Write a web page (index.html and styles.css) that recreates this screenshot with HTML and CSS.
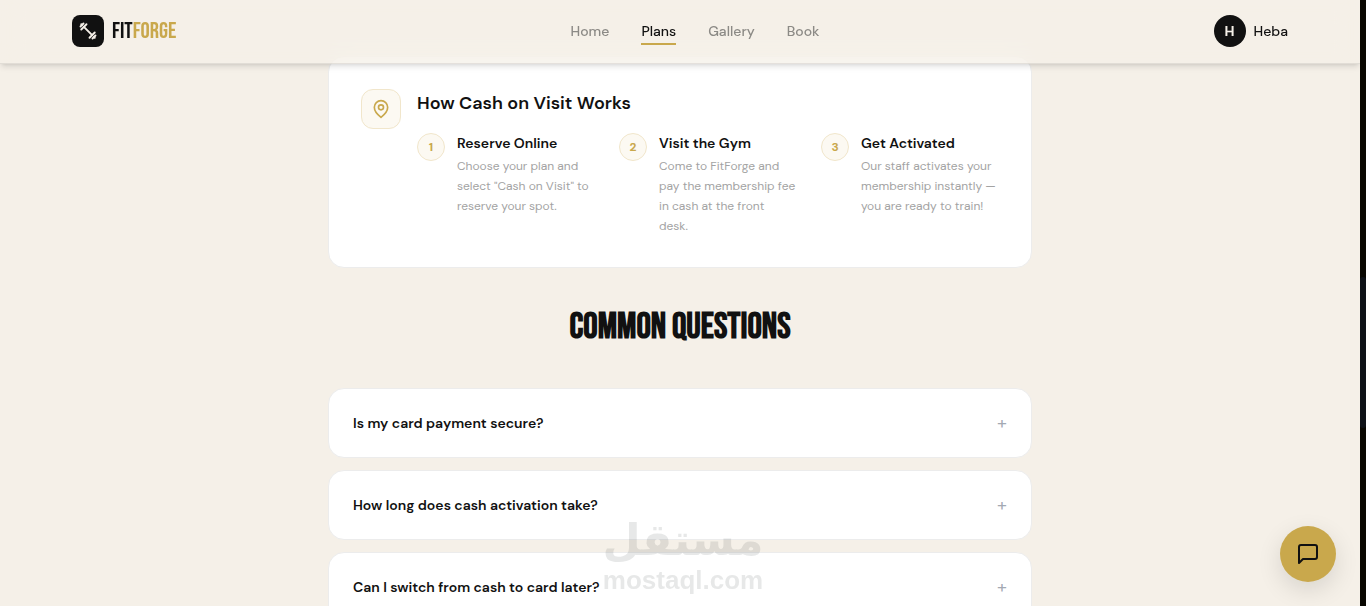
FILE: index.html
```html
<!DOCTYPE html>
<html lang="en">
<head>
    <meta charset="UTF-8">
    <meta name="viewport" content="width=device-width, initial-scale=1.0">
    <title>FitForge - Plans</title>
    <link rel="stylesheet" href="styles.css">
</head>
<body>

<header class="site-header">
    <div class="header-inner">
        <a href="#" class="logo">
            <span class="logo-icon">
                <svg width="18" height="18" viewBox="0 0 24 24" fill="none" stroke="currentColor" stroke-width="2.5" stroke-linecap="round" stroke-linejoin="round" aria-hidden="true">
                    <path d="m6.5 6.5 11 11"/>
                    <path d="m21 21-1-1"/>
                    <path d="m3 3 1 1"/>
                    <path d="m18 22 4-4"/>
                    <path d="m2 6 4-4"/>
                    <path d="m3 10 7-7"/>
                    <path d="m14 21 7-7"/>
                </svg>
            </span>
            <span class="logo-text">FIT<span class="gold">FORGE</span></span>
        </a>

        <nav class="nav">
            <a href="#">Home</a>
            <a href="#" class="active">Plans</a>
            <a href="#">Gallery</a>
            <a href="#">Book</a>
        </nav>

        <a href="#" class="user">
            <span class="avatar">H</span>
            <span>Heba</span>
        </a>
    </div>
</header>

<main class="container">
    <section class="card how">
        <span class="how-icon">
            <svg width="20" height="20" viewBox="0 0 24 24" fill="none" stroke="currentColor" stroke-width="2" stroke-linecap="round" stroke-linejoin="round" aria-hidden="true">
                <path d="M20 10c0 6-8 12-8 12s-8-6-8-12a8 8 0 0 1 16 0Z"/>
                <circle cx="12" cy="10" r="3"/>
            </svg>
        </span>
        <div class="how-body">
            <h3>How Cash on Visit Works</h3>
            <div class="steps">
                <div class="step">
                    <span class="step-number">1</span>
                    <div>
                        <h4>Reserve Online</h4>
                        <p>Choose your plan and select "Cash on Visit" to reserve your spot.</p>
                    </div>
                </div>
                <div class="step">
                    <span class="step-number">2</span>
                    <div>
                        <h4>Visit the Gym</h4>
                        <p>Come to FitForge and pay the membership fee in cash at the front desk.</p>
                    </div>
                </div>
                <div class="step">
                    <span class="step-number">3</span>
                    <div>
                        <h4>Get Activated</h4>
                        <p>Our staff activates your membership instantly — you are ready to train!</p>
                    </div>
                </div>
            </div>
        </div>
    </section>

    <section class="faq">
        <h2>COMMON QUESTIONS</h2>
        <div class="faq-list">
            <button type="button" class="card faq-item" aria-expanded="false">
                <span>Is my card payment secure?</span>
                <span class="plus">+</span>
            </button>
            <button type="button" class="card faq-item" aria-expanded="false">
                <span>How long does cash activation take?</span>
                <span class="plus">+</span>
            </button>
            <button type="button" class="card faq-item" aria-expanded="false">
                <span>Can I switch from cash to card later?</span>
                <span class="plus">+</span>
            </button>
        </div>
    </section>
</main>

<div class="watermark">
    <span class="watermark-ar" lang="ar" dir="rtl">مستقل</span>
    <span class="watermark-en">mostaql.com</span>
</div>

<button type="button" class="chat" aria-label="Open chat">
    <svg width="24" height="24" viewBox="0 0 24 24" fill="none" stroke="currentColor" stroke-width="2" stroke-linecap="round" stroke-linejoin="round" aria-hidden="true">
        <path d="M21 15a2 2 0 0 1-2 2H7l-4 4V5a2 2 0 0 1 2-2h14a2 2 0 0 1 2 2z"/>
    </svg>
</button>

<div class="scroll-track"><div class="scroll-thumb"></div></div>

</body>
</html>
```
FILE: styles.css
```css
* {
    box-sizing: border-box;
}

html {
    scrollbar-width: none;
}

body {
    margin: 0;
    padding-right: 6px;
    background-color: #f5f0e8;
    color: #111;
    font-family: "DM Sans", Inter, sans-serif;
    font-size: 14px;
    line-height: 20px;
}

h2, h3, h4, p {
    margin: 0;
}

a {
    color: inherit;
    text-decoration: none;
}

button {
    font: inherit;
    color: inherit;
    cursor: pointer;
}

svg {
    display: block;
}

.gold {
    color: #c9a84c;
}

/* Header */
.site-header {
    position: sticky;
    top: 0;
    z-index: 10;
    height: 64px;
    background-color: rgba(245, 240, 232, 0.6);
    backdrop-filter: blur(12px);
    border-bottom: 1px solid rgba(0, 0, 0, 0.08);
    box-shadow: 0 4px 6px -1px rgba(0, 0, 0, 0.1), 0 2px 4px -2px rgba(0, 0, 0, 0.1);
}

.header-inner {
    display: flex;
    align-items: center;
    justify-content: space-between;
    max-width: 1280px;
    height: 62px;
    margin: 0 auto;
    padding: 0 32px;
}

.logo,
.user {
    display: flex;
    align-items: center;
    gap: 8px;
}

.logo-icon,
.avatar {
    display: flex;
    align-items: center;
    justify-content: center;
    width: 32px;
    height: 32px;
    background-color: #111;
    color: #f5f0e8;
}

.logo-icon {
    border-radius: 8px;
}

.logo-text {
    font-family: "Bebas Neue", "Liberation Sans Narrow", sans-serif;
    font-size: 23px;
    line-height: 32px;
}

.nav {
    display: flex;
    gap: 32px;
}

.nav a {
    padding: 4px 0 2px;
    border-bottom: 2px solid transparent;
    color: #8c8a86;
    font-weight: 500;
}

.nav .active {
    border-color: #c9a84c;
    color: #111;
}

.avatar {
    border-radius: 50%;
    font-weight: 700;
}

.user {
    font-weight: 500;
}

/* Content, starts slightly under the header */
.container {
    max-width: 768px;
    margin: -8px auto 0;
    padding: 0 32px 64px;
}

.card {
    background-color: #fff;
    border: 1px solid #ececec;
    border-radius: 16px;
}

.how {
    display: flex;
    gap: 16px;
    padding: 32px 32px 31px;
}

.how-icon,
.step-number {
    display: flex;
    flex-shrink: 0;
    align-items: center;
    justify-content: center;
    background-color: #fcf9f2;
    border: 1px solid #f1e6cb;
    color: #c9a84c;
}

.how-icon {
    width: 40px;
    height: 40px;
    border-radius: 12px;
}

.how-body {
    flex: 1;
}

.how h3 {
    margin-bottom: 16px;
    font-size: 18px;
    font-weight: 600;
    line-height: 28px;
}

.steps {
    display: grid;
    grid-template-columns: repeat(3, 1fr);
    gap: 24px;
}

.step {
    display: flex;
    gap: 12px;
}

.step-number {
    width: 28px;
    height: 28px;
    border-radius: 50%;
    font-size: 12px;
    font-weight: 700;
}

.step h4 {
    font-size: 14px;
    font-weight: 600;
}

.step p {
    margin-top: 3px;
    padding-right: 1px;
    color: #a3a3a3;
    font-size: 12px;
}

/* FAQ */
.faq h2 {
    margin: 40px 0;
    font-family: "Bebas Neue", "Liberation Sans Narrow", sans-serif;
    font-size: 36px;
    font-weight: 700;
    line-height: 40px;
    text-align: center;
}

.faq-list {
    display: flex;
    flex-direction: column;
    gap: 12px;
}

.faq-item {
    display: flex;
    align-items: center;
    justify-content: space-between;
    width: 100%;
    min-height: 70px;
    padding: 0 24px;
    font-weight: 600;
    text-align: left;
}

.plus {
    color: #a3a9b3;
    font-size: 18px;
    font-weight: 400;
}

/* Floating items */
.watermark {
    position: fixed;
    right: 0;
    bottom: 12px;
    left: 0;
    display: flex;
    flex-direction: column;
    align-items: center;
    opacity: 0.12;
    color: #3c4646;
    font-weight: 700;
    pointer-events: none;
}

.watermark-ar {
    font-family: "DejaVu Sans", sans-serif;
    font-size: 44px;
    line-height: 52px;
}

.watermark-en {
    font-family: "Liberation Sans", sans-serif;
    font-size: 26px;
    line-height: 28px;
}

.chat {
    position: fixed;
    right: 30px;
    bottom: 24px;
    z-index: 20;
    display: flex;
    align-items: center;
    justify-content: center;
    width: 56px;
    height: 56px;
    padding: 0;
    border: none;
    border-radius: 50%;
    background-color: #c9a84c;
    box-shadow: 0 8px 24px rgba(0, 0, 0, 0.12);
}

.scroll-track {
    position: fixed;
    top: 0;
    right: 0;
    bottom: 0;
    z-index: 30;
    width: 6px;
    padding-top: 277px;
    background-color: #080600;
}

.scroll-thumb {
    height: 151px;
    border-radius: 3px;
    background-color: #0e1116;
}
```
